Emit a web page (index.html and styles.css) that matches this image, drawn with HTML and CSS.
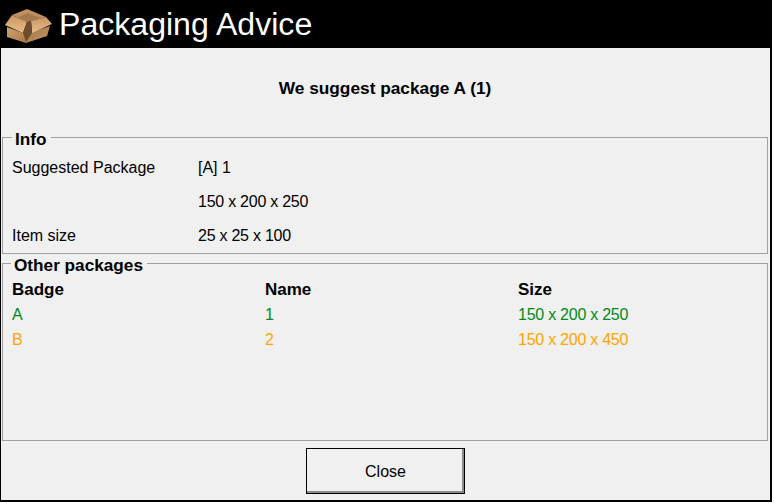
FILE: index.html
```html
<!DOCTYPE html>
<html lang="en">
<head>
    <meta charset="UTF-8">
    <title>Packaging Advice</title>
    <link rel="stylesheet" href="styles.css">
</head>
<body>
    <div class="window">
        <header class="title-bar">
            <svg class="box-icon" viewBox="0 0 47 36" width="47" height="36">
                <defs>
                    <linearGradient id="boxLeft" x1="0" y1="0" x2="1" y2="1">
                        <stop offset="0" stop-color="#d0a06c"/>
                        <stop offset="1" stop-color="#a97a4a"/>
                    </linearGradient>
                    <linearGradient id="boxRight" x1="0" y1="0" x2="1" y2="1">
                        <stop offset="0" stop-color="#9c7044"/>
                        <stop offset="1" stop-color="#cc9c68"/>
                    </linearGradient>
                    <linearGradient id="flap" x1="0" y1="0" x2="0" y2="1">
                        <stop offset="0" stop-color="#c9975f"/>
                        <stop offset="1" stop-color="#e6bd8d"/>
                    </linearGradient>
                </defs>
                <path d="M2 19 L21 26 L21 35 L2 29 Z" fill="url(#boxLeft)"/>
                <path d="M45 18 L21 26 L21 35 L42 28 Z" fill="url(#boxRight)"/>
                <path d="M7 7 L22 1 L41 9 L26 13 L22 14 Z" fill="#c08f5e"/>
                <path d="M13 9 L23 5 L36 10 L26 13 L22 14 Z" fill="#a67a4c"/>
                <path d="M0 17 L7 7 L22 14 L18 25 Z" fill="url(#flap)"/>
                <path d="M47 16 L41 9 L26 13 L27 25 Z" fill="url(#flap)"/>
                <path d="M22 14 L26 13 L27 25 L21 34 L18 25 Z" fill="#6f4d2c"/>
            </svg>
            <h1>Packaging Advice</h1>
        </header>
        <main class="content">
            <h2 class="suggestion">We suggest package A (1)</h2>
            <fieldset class="group info">
                <legend>Info</legend>
                <div class="info-row"><span class="info-label">Suggested Package</span><span>[A] 1</span></div>
                <div class="info-row"><span class="info-label"></span><span class="size">150 x 200 x 250</span></div>
                <div class="info-row"><span class="info-label">Item size</span><span class="size">25 x 25 x 100</span></div>
            </fieldset>
            <fieldset class="group others">
                <legend>Other packages</legend>
                <div class="pkg-row pkg-head"><span>Badge</span><span>Name</span><span>Size</span></div>
                <div class="pkg-row pkg-a"><span>A</span><span>1</span><span class="size">150 x 200 x 250</span></div>
                <div class="pkg-row pkg-b"><span>B</span><span>2</span><span class="size">150 x 200 x 450</span></div>
            </fieldset>
            <div class="actions">
                <button class="close-btn">Close</button>
            </div>
        </main>
    </div>
</body>
</html>
```

FILE: styles.css
```css
html, body {
    margin: 0;
    height: 100%;
    background: #fff;
}

body {
    font-family: "Liberation Sans", Arial, sans-serif;
    font-size: 16px;
    color: #000;
}

.window {
    height: 502px;
    width: 772px;
    display: flex;
    flex-direction: column;
    box-sizing: border-box;
    background: #000;
    padding: 0 2px 2px 1px;
}

.title-bar {
    height: 48px;
    flex: none;
    display: flex;
    align-items: center;
    gap: 7px;
    padding-left: 4px;
    margin-left: -1px;
    color: #fff;
}

.title-bar h1 {
    margin: 0;
    font-size: 32.1px;
    font-weight: normal;
    line-height: 48px;
}

.box-icon {
    flex: none;
    margin: 4px 0 0 1px;
}

.content {
    flex: 1;
    min-height: 0;
    background: #f0f0f0;
    display: flex;
    flex-direction: column;
    padding: 0 2px 0 1px;
}

.suggestion {
    margin: 0;
    height: 78px;
    flex: none;
    line-height: 81px;
    font-size: 17.3px;
    font-weight: bold;
    text-align: center;
}

.group {
    margin: 0;
    padding: 0;
    border: 1px solid #a0a0a0;
    min-width: 0;
}

.group legend {
    padding: 4px 4px 0 3px;
    font-size: 17.2px;
    font-weight: bold;
    line-height: 18px;
}

.info {
    height: 128px;
    flex: none;
    box-sizing: border-box;
    padding: 3px 9px 0;
}

.info-row {
    display: flex;
    height: 34px;
    line-height: 34px;
}

.info-label {
    width: 186px;
}

.size {
    letter-spacing: -0.25px;
}

.others {
    flex: 1;
    min-height: 0;
    padding: 0 9px;
    margin-top: -2px;
}

.others legend {
    margin-left: -1px;
}

.pkg-row {
    display: grid;
    grid-template-columns: 253px 253px 1fr;
    height: 26px;
    line-height: 26px;
}

.pkg-head {
    height: 28px;
    line-height: 32px;
    font-size: 17px;
    font-weight: bold;
}

.pkg-a {
    height: 25px;
    color: #008a20;
}

.pkg-b {
    color: #ffa500;
}

.actions {
    height: 59px;
    flex: none;
    display: flex;
    justify-content: center;
    align-items: center;
}

.close-btn {
    width: 159px;
    height: 46px;
    margin-left: 1px;
    padding-top: 3px;
    background: #f0f0f0;
    border: 1px solid #000;
    box-shadow: inset -2px -2px 0 #8a8a8a;
    font-family: inherit;
    font-size: 16px;
    color: #000;
}
```
